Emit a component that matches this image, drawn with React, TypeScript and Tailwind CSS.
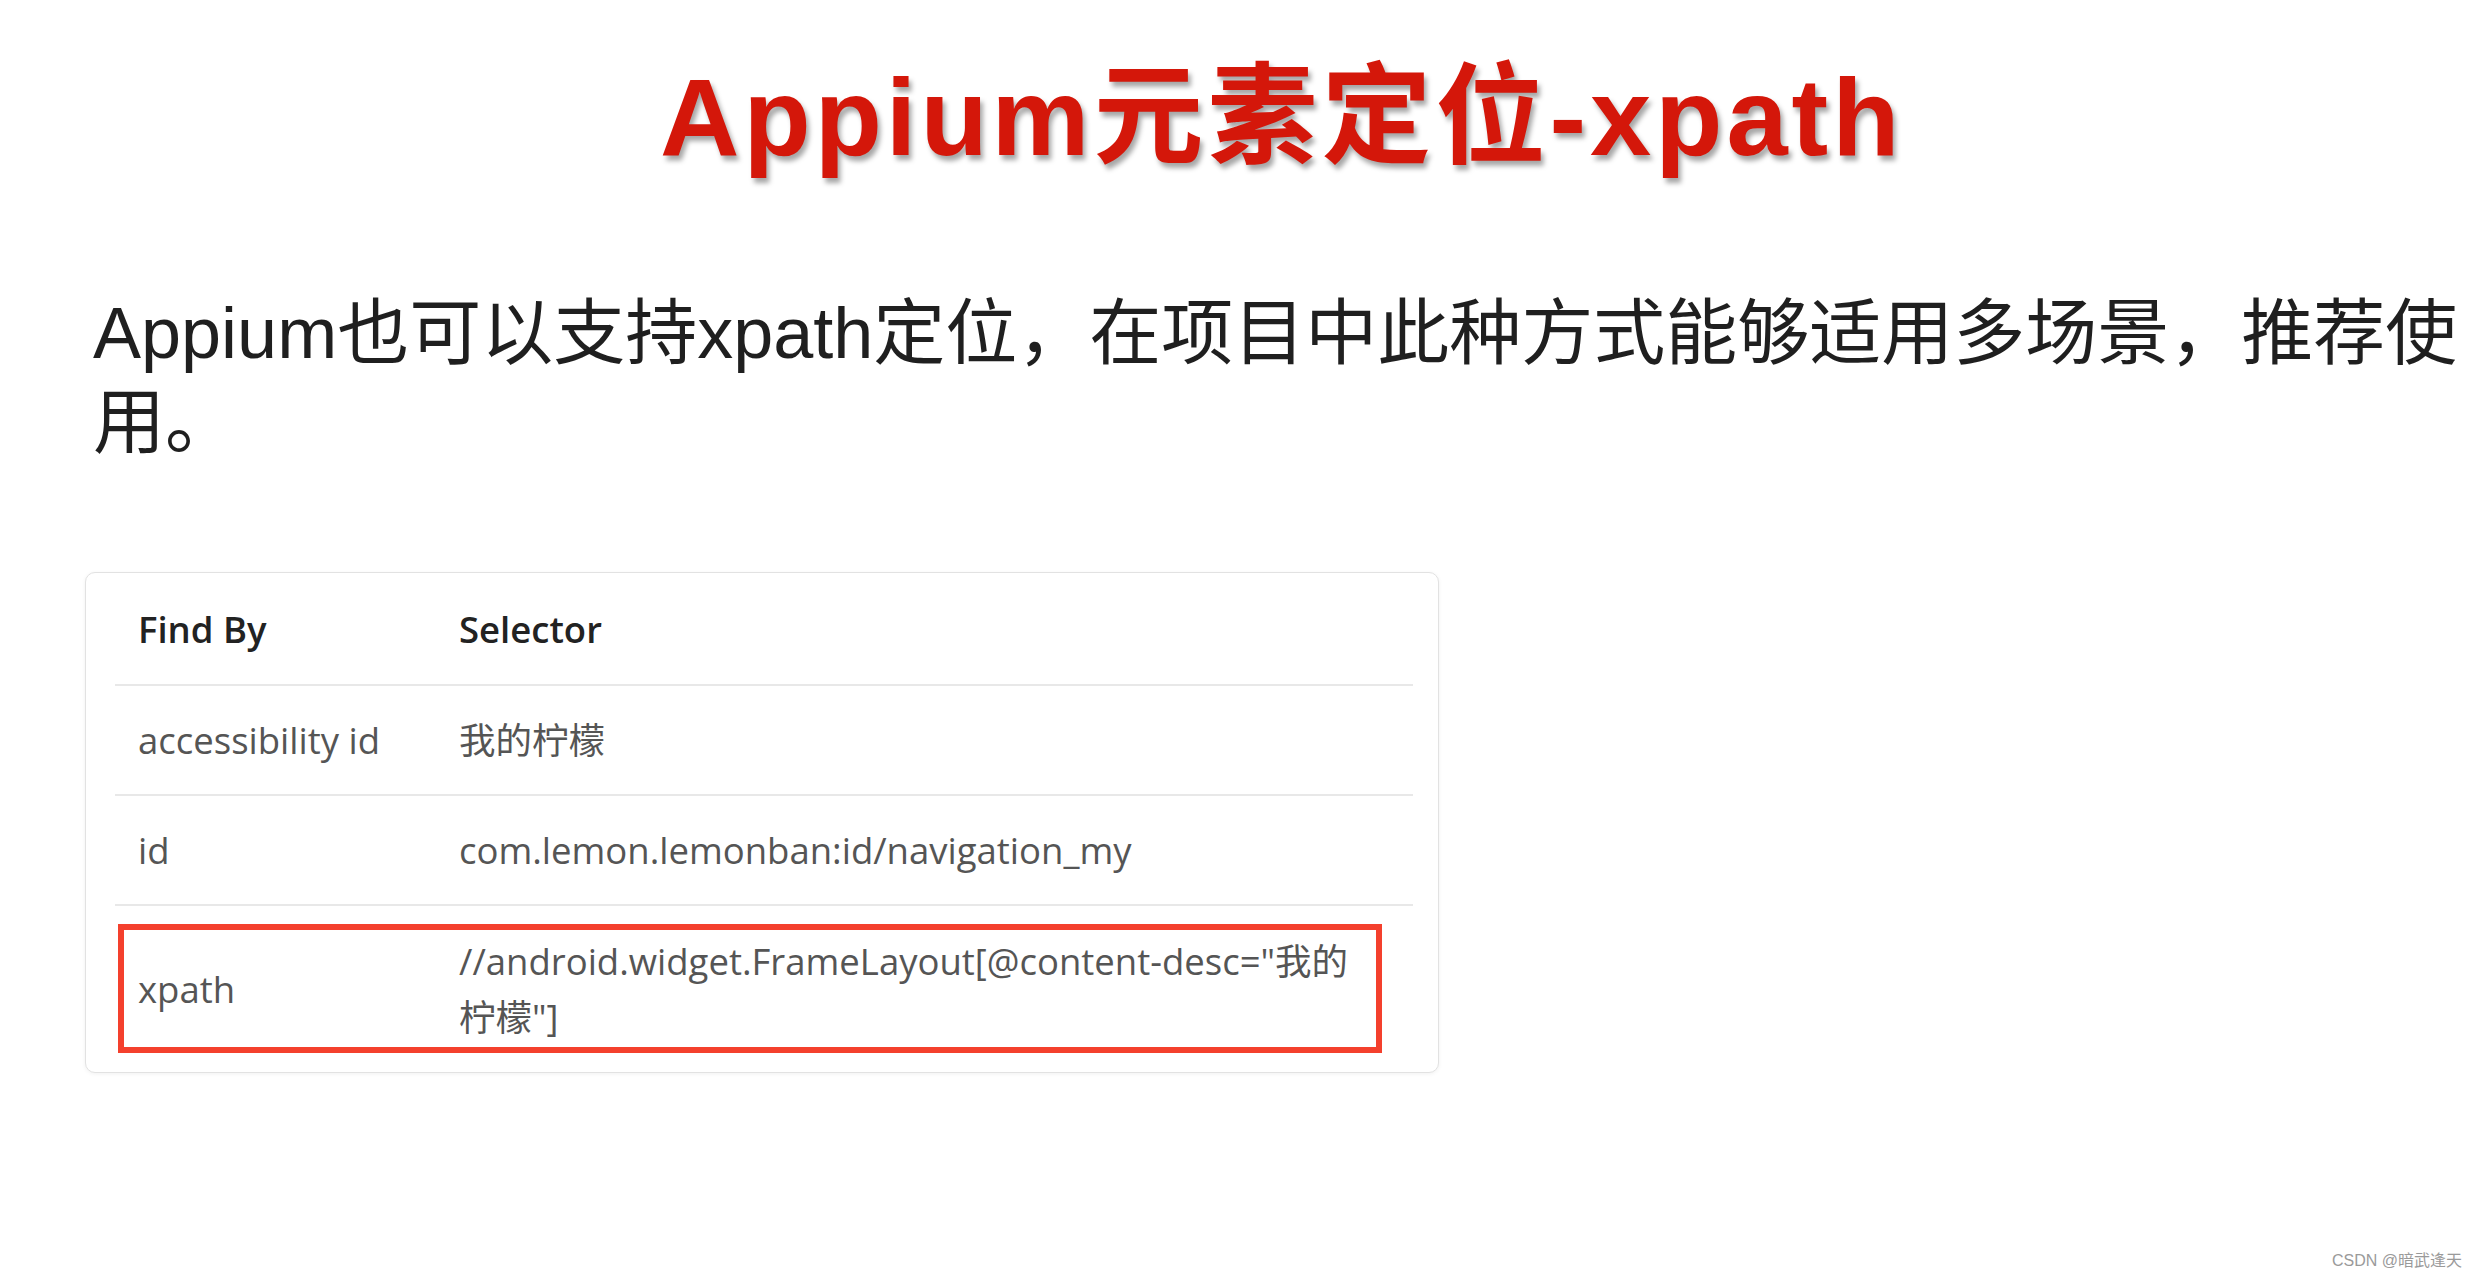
import React from "react";

const rows = [
  { by: "accessibility id", selector: "我的柠檬" },
  { by: "id", selector: "com.lemon.lemonban:id/navigation_my" },
];

const cjk = "font-['Liberation_Sans','Noto_Sans_CJK_SC',sans-serif]";
const ui = "font-['Open_Sans','Noto_Sans_CJK_SC',sans-serif]";

export default function App() {
  return (
    <div className="relative w-[2477px] h-[1281px] bg-white overflow-hidden">
      {/* Slide title */}
      <h1
        className={`${cjk} pl-[660px] pt-[62px] text-[110px] leading-none font-bold tracking-[4px] text-[#d4170a] [text-shadow:3px_5px_5px_rgba(0,0,0,0.35)]`}
      >
        Appium元素定位-xpath
      </h1>

      {/* Intro text */}
      <p className={`${cjk} mt-[117px] pl-[93px] text-[72px] leading-[89px] text-[#1f1f1f]`}>
        Appium也可以支持xpath定位，在项目中此种方式能够适用多场景，推荐使用。
      </p>

      {/* Table card */}
      <div className="mt-[105px] ml-[85px] w-[1354px] rounded-[10px] border border-[#e2e2e2] bg-white pl-[29px] pr-[25px] pt-[1px] shadow-[0_1px_4px_rgba(0,0,0,0.06)]">
        <div className={`${ui} text-[36.5px]`}>
          <div className="grid grid-cols-[321px_1fr] h-[110px] items-center text-[#222] font-semibold">
            <div className="px-[23px]">Find By</div>
            <div className="px-[23px]">Selector</div>
          </div>
          {rows.map((r) => (
            <div
              key={r.by}
              className="grid grid-cols-[321px_1fr] h-[110px] items-center border-t-2 border-[#e8e8e8] text-[#555]"
            >
              <div className="px-[23px]">{r.by}</div>
              <div className="px-[23px]">{r.selector}</div>
            </div>
          ))}
          <div className="relative grid grid-cols-[321px_1fr] items-center border-t-2 border-[#e8e8e8] py-[27px] text-[#555] leading-[56px]">
            <div className="px-[23px]">xpath</div>
            <div className="pl-[23px] pr-[50px]">//android.widget.FrameLayout[@content-desc="我的柠檬"]</div>
            {/* annotation box */}
            <div className="absolute top-[18px] left-[3px] right-[31px] bottom-[19px] border-[6px] border-[#f4402d]" />
          </div>
        </div>
      </div>

      <div className="absolute right-[15px] bottom-[8px] font-['Liberation_Sans','Noto_Sans_CJK_SC',sans-serif] text-[16px] text-[#9a9a9a]">
        CSDN @暗武逢天
      </div>
    </div>
  );
}
